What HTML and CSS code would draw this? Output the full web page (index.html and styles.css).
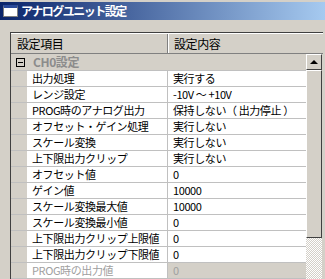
FILE: index.html
```html
<!DOCTYPE html>
<html lang="ja">

<head>
    <meta charset="UTF-8" />
    <title>アナログユニット設定</title>
    <link rel="stylesheet" href="styles.css">
</head>

<body>
    <div class="titlebar">
        <span class="winicon"></span>
        <span class="title">アナログユニット設定</span>
    </div>

    <div class="panel">
        <div class="header">
            <div class="hcell hname">設定項目</div>
            <div class="hcell hvalue">設定内容</div>
        </div>
        <div class="body">
            <div class="grid">
                <div class="group">
                    <span class="toggle"></span>
                    <span class="gname">CH0設定</span>
                </div>
                <div class="row"><div class="indent"></div><div class="name">出力処理</div><div class="value">実行する</div></div>
                <div class="row"><div class="indent"></div><div class="name">レンジ設定</div><div class="value">-10V 〜 +10V</div></div>
                <div class="row"><div class="indent"></div><div class="name">PROG時のアナログ出力</div><div class="value">保持しない（ 出力停止 ）</div></div>
                <div class="row"><div class="indent"></div><div class="name">オフセット・ゲイン処理</div><div class="value">実行しない</div></div>
                <div class="row"><div class="indent"></div><div class="name">スケール変換</div><div class="value">実行しない</div></div>
                <div class="row"><div class="indent"></div><div class="name">上下限出力クリップ</div><div class="value">実行しない</div></div>
                <div class="row"><div class="indent"></div><div class="name">オフセット値</div><div class="value">0</div></div>
                <div class="row"><div class="indent"></div><div class="name">ゲイン値</div><div class="value">10000</div></div>
                <div class="row"><div class="indent"></div><div class="name">スケール変換最大値</div><div class="value">10000</div></div>
                <div class="row"><div class="indent"></div><div class="name">スケール変換最小値</div><div class="value">0</div></div>
                <div class="row"><div class="indent"></div><div class="name">上下限出力クリップ上限値</div><div class="value">0</div></div>
                <div class="row"><div class="indent"></div><div class="name">上下限出力クリップ下限値</div><div class="value">0</div></div>
                <div class="row disabled"><div class="indent"></div><div class="name">PROG時の出力値</div><div class="value">0</div></div>
            </div>
            <div class="scrollbar">
                <div class="sbtn"><span class="arrow"></span></div>
                <div class="thumb"></div>
                <div class="track"></div>
            </div>
        </div>
    </div>
</body>

</html>
```

FILE: styles.css
```css
body {
    margin: 0;
    background-color: #d4d0c8;
    font-family: "MS UI Gothic", "Noto Sans CJK JP", sans-serif;
    font-size: 11px;
    letter-spacing: -0.4px;
    color: #000;
    overflow: hidden;
}

/* タイトルバー */
.titlebar {
    margin-top: 2px;
    height: 18px;
    display: flex;
    align-items: center;
    padding-left: 3px;
    background: linear-gradient(to right, #0a246a, #a6caf0);
}

.winicon {
    width: 13px;
    height: 8px;
    background-color: #fff;
    border: 1px solid #808080;
    border-top: 3px solid #2a4a9a;
    margin-right: 3px;
}

.title {
    color: #fff;
    font-weight: bold;
    font-size: 12px;
    letter-spacing: -1.5px;
    line-height: 18px;
}

/* 一覧 */
.panel {
    margin: 12px 2px 0 10px;
    border-top: 1px solid #404040;
    border-left: 1px solid #404040;
}

.header {
    display: flex;
    height: 19px;
    border-top: 1px solid #fff;
    border-bottom: 1px solid #808080;
    font-size: 12px;
}

.hcell {
    line-height: 19px;
    padding-left: 6px;
}

.hname {
    width: 150px;
    border-right: 1px solid #808080;
    box-shadow: 1px 0 0 #fff;
}

.hvalue {
    flex: 1;
}

.body {
    display: flex;
}

.grid {
    width: 295px;
}

.group {
    height: 16px;
    display: flex;
    align-items: center;
    border-bottom: 1px solid #c0c0c0;
}

.toggle {
    position: relative;
    width: 7px;
    height: 7px;
    border: 1px solid #000;
    margin-left: 5px;
    margin-right: 8px;
}

.toggle::after {
    content: "";
    position: absolute;
    left: 1px;
    right: 1px;
    top: 3px;
    height: 1px;
    background-color: #000;
}

.gname {
    color: #8c8c8c;
    font-weight: bold;
    font-size: 12px;
    line-height: 16px;
}

.row {
    display: flex;
    height: 15px;
    border-bottom: 1px solid #c0c0c0;
}

.indent {
    width: 16px;
    background-color: #d4d0c8;
}

.name,
.value {
    background-color: #fff;
    line-height: 15px;
    padding-left: 5px;
    white-space: nowrap;
    overflow: hidden;
}

.name {
    width: 135px;
    border-right: 1px solid #c0c0c0;
}

.value {
    flex: 1;
}

.disabled .name,
.disabled .value {
    color: #a0a0a0;
}

.disabled .value {
    background-color: #d4d0c8;
}

/* スクロールバー */
.scrollbar {
    width: 16px;
    display: flex;
    flex-direction: column;
}

.sbtn,
.thumb {
    box-sizing: border-box;
    background-color: #d4d0c8;
    border: 1px solid;
    border-color: #fff #404040 #404040 #fff;
}

.sbtn {
    height: 16px;
    display: flex;
    align-items: center;
    justify-content: center;
}

.arrow {
    width: 0;
    height: 0;
    border-left: 4px solid transparent;
    border-right: 4px solid transparent;
    border-bottom: 4px solid #000;
}

.thumb {
    height: 168px;
}

.track {
    flex: 1;
    background-color: #fff;
    background-image: repeating-conic-gradient(#d4d0c8 0 25%, #fff 0 50%);
    background-size: 2px 2px;
}
```
